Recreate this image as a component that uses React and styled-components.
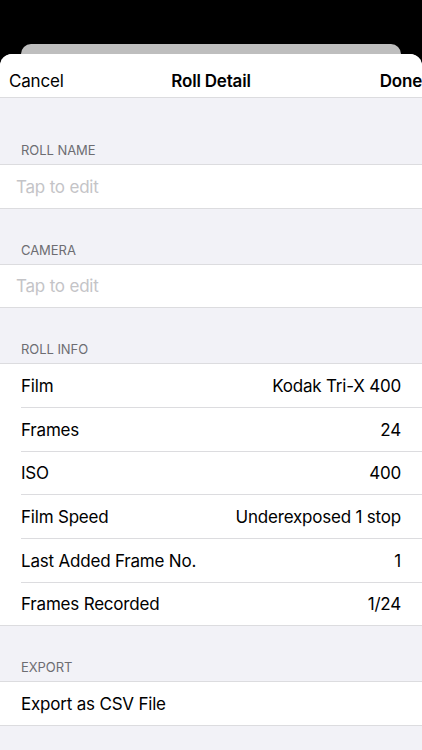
import React from "react";
import styled, { createGlobalStyle } from "styled-components";

const GlobalStyle = createGlobalStyle`
  html, body {
    margin: 0;
    padding: 0;
    background: #000;
  }
  body {
    font-family: Inter, "Noto Sans", "Liberation Sans", sans-serif;
    -webkit-font-smoothing: antialiased;
  }
  * { box-sizing: border-box; }
`;

const sections = [
  { title: "ROLL NAME", rows: [{ placeholder: "Tap to edit" }] },
  { title: "CAMERA", rows: [{ placeholder: "Tap to edit" }] },
  {
    title: "ROLL INFO",
    rows: [
      { label: "Film", value: "Kodak Tri-X 400" },
      { label: "Frames", value: "24" },
      { label: "ISO", value: "400" },
      { label: "Film Speed", value: "Underexposed 1 stop" },
      { label: "Last Added Frame No.", value: "1" },
      { label: "Frames Recorded", value: "1/24" }
    ]
  },
  { title: "EXPORT", rows: [{ label: "Export as CSV File" }] }
];

const App = () => {
  return (
    <>
      <GlobalStyle />
      <Screen>
        <BackCard />
        <Sheet>
          <NavBar>
            <NavButton>Cancel</NavButton>
            <NavTitle>Roll Detail</NavTitle>
            <NavButton bold align="right">Done</NavButton>
          </NavBar>
          {sections.map((section, i) => (
            <Section key={section.title}>
              <SectionHeader first={i === 0}>{section.title}</SectionHeader>
              <Group>
                {section.rows.map((row, j) => (
                  <Row
                    key={j}
                    inset={row.placeholder ? 16 : 21}
                    last={j === section.rows.length - 1}
                  >
                    {row.placeholder ? (
                      <Placeholder>{row.placeholder}</Placeholder>
                    ) : (
                      <>
                        <Label>{row.label}</Label>
                        {row.value && <Value>{row.value}</Value>}
                      </>
                    )}
                  </Row>
                ))}
              </Group>
            </Section>
          ))}
        </Sheet>
      </Screen>
    </>
  );
};

export default App;

const Screen = styled.div`
  display: flex;
  flex-direction: column;
  width: 422px;
  height: 750px;
  padding-top: 44px;
  background: #000;
  overflow: hidden;
`;

const BackCard = styled.div`
  height: 10px;
  margin: 0 21px;
  background: #bebebe;
  border-radius: 10px 10px 0 0;
  flex-shrink: 0;
`;

const Sheet = styled.div`
  flex: 1;
  background: #f2f2f7;
  border-radius: 12px 12px 0 0;
  overflow: hidden;
`;

const NavBar = styled.div`
  display: grid;
  grid-template-columns: 1fr auto 1fr;
  align-items: end;
  height: 44px;
  padding: 0 0 5px 9px;
  background: #fff;
  border-bottom: 1px solid #dcdcdf;
`;

const NavButton = styled.div`
  font-size: 17px;
  line-height: 22px;
  color: #000;
  font-weight: ${({ bold }) => (bold ? 600 : 400)};
  text-align: ${({ align }) => align || "left"};
  letter-spacing: -0.2px;
  white-space: nowrap;
`;

const NavTitle = styled.div`
  font-size: 17px;
  line-height: 22px;
  font-weight: 600;
  color: #000;
  letter-spacing: -0.2px;
  margin-left: -9px;
`;

const Section = styled.div`
  display: flex;
  flex-direction: column;
`;

const SectionHeader = styled.div`
  padding: ${({ first }) => (first ? "44px" : "33px")} 21px 6px;
  font-size: 13px;
  line-height: 16px;
  color: #6d6d72;
  letter-spacing: -0.05px;
`;

const Group = styled.div`
  background: #fff;
  border-top: 1px solid #dcdcdf;
`;

const Row = styled.div`
  position: relative;
  display: flex;
  align-items: center;
  justify-content: space-between;
  height: 43.67px;
  padding: 0 21px 0 ${({ inset }) => inset}px;

  &::after {
    content: "";
    position: absolute;
    bottom: 0;
    left: ${({ last }) => (last ? "0" : "21px")};
    right: 0;
    height: 1px;
    background: #dcdcdf;
  }
`;

const Label = styled.span`
  font-size: 17px;
  color: #000;
  letter-spacing: -0.2px;
`;

const Value = styled.span`
  font-size: 17px;
  color: #000;
  letter-spacing: -0.2px;
`;

const Placeholder = styled.span`
  font-size: 17px;
  color: #c4c4c7;
  letter-spacing: -0.2px;
`;
